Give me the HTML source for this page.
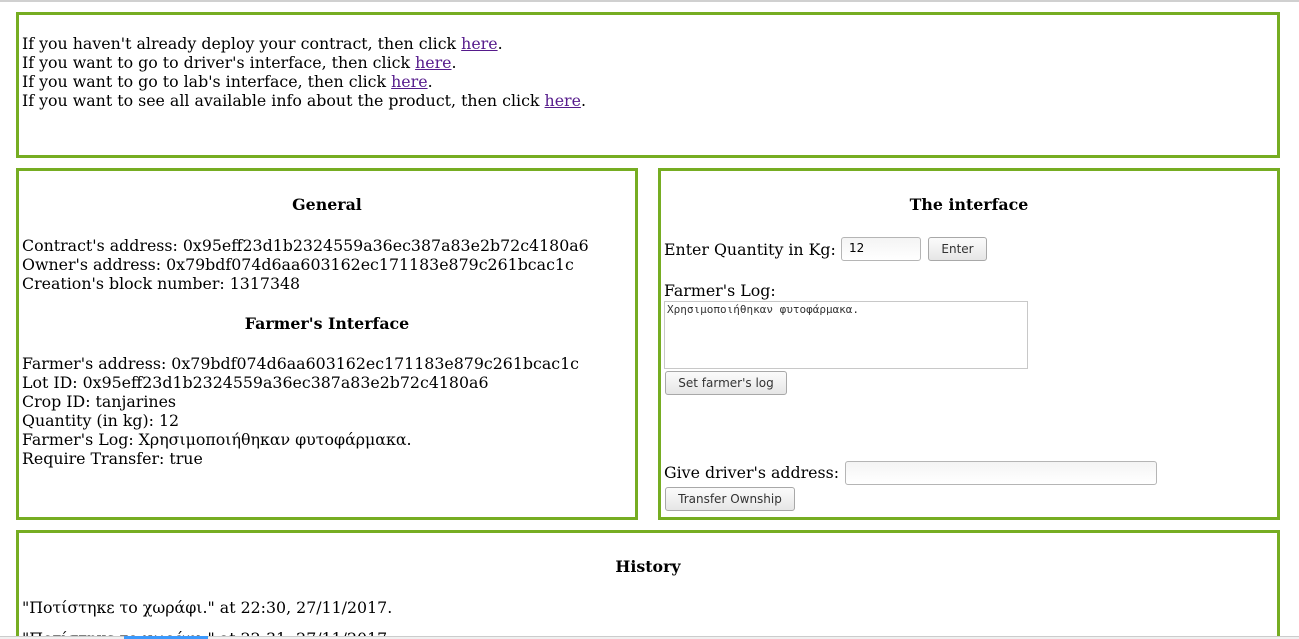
<!DOCTYPE html>
<html style="height:639px;overflow:hidden"><head><meta charset="utf-8"><style>
body{margin:0;width:1299px;height:639px;overflow:hidden;background:#fff;font-family:"DejaVu Serif","Liberation Serif",serif;font-size:15.8px;color:#000;position:relative}
.box{position:absolute;border:3px solid #76ad22;box-sizing:border-box}
.t{position:absolute;line-height:19px;white-space:nowrap}
.c{text-align:center;font-weight:bold}
a{color:#551a8b;text-decoration:underline}
.inp{position:absolute;border:1px solid #b5b5b5;border-radius:3px;background:linear-gradient(#f4f4f4,#fff);box-sizing:border-box;font-family:"DejaVu Sans",sans-serif;font-size:12px;padding-left:7px;line-height:21px}
.btn{position:absolute;border:1px solid #a8a8a8;border-radius:3px;background:linear-gradient(#fbfbfb,#e6e6e6);box-sizing:border-box;font-family:"DejaVu Sans",sans-serif;font-size:12px;color:#333;text-align:center;line-height:22px}
</style></head><body>
<div style="position:absolute;left:0;top:0;width:1299px;height:2px;background:#d0d0d0"></div>
<div class="box" style="left:16px;top:12px;width:1264px;height:146px"></div>
<div class="t" style="left:22px;top:34px">If you haven't already deploy your contract, then click <a>here</a>.</div>
<div class="t" style="left:22px;top:53px">If you want to go to driver's interface, then click <a>here</a>.</div>
<div class="t" style="left:22px;top:72px">If you want to go to lab's interface, then click <a>here</a>.</div>
<div class="t" style="left:22px;top:91px">If you want to see all available info about the product, then click <a>here</a>.</div>

<div class="box" style="left:16px;top:168px;width:622px;height:352px"></div>
<div class="t c" style="left:19px;width:616px;top:195px">General</div>
<div class="t" style="left:22px;top:236px">Contract's address: 0x95eff23d1b2324559a36ec387a83e2b72c4180a6</div>
<div class="t" style="left:22px;top:255px">Owner's address: 0x79bdf074d6aa603162ec171183e879c261bcac1c</div>
<div class="t" style="left:22px;top:274px">Creation's block number: 1317348</div>
<div class="t c" style="left:19px;width:616px;top:314px">Farmer's Interface</div>
<div class="t" style="left:22px;top:354px">Farmer's address: 0x79bdf074d6aa603162ec171183e879c261bcac1c</div>
<div class="t" style="left:22px;top:373px">Lot ID: 0x95eff23d1b2324559a36ec387a83e2b72c4180a6</div>
<div class="t" style="left:22px;top:392px">Crop ID: tanjarines</div>
<div class="t" style="left:22px;top:411px">Quantity (in kg): 12</div>
<div class="t" style="left:22px;top:430px">Farmer's Log: Χρησιμοποιήθηκαν φυτοφάρμακα.</div>
<div class="t" style="left:22px;top:449px">Require Transfer: true</div>

<div class="box" style="left:658px;top:168px;width:622px;height:352px"></div>
<div class="t c" style="left:661px;width:616px;top:195px">The interface</div>
<div class="t" style="left:664px;top:240px">Enter Quantity in Kg:</div>
<div class="inp" style="left:841px;top:237px;width:80px;height:24px">12</div>
<div class="btn" style="left:928px;top:237px;width:59px;height:24px">Enter</div>
<div class="t" style="left:664px;top:281px">Farmer's Log:</div>
<div style="position:absolute;left:664px;top:301px;width:364px;height:68px;border:1px solid #c8c8c8;box-sizing:border-box;font-family:'DejaVu Sans Mono',monospace;font-size:11px;padding:1px 2px;line-height:13px;color:#333">Χρησιμοποιήθηκαν φυτοφάρμακα.</div>
<div class="btn" style="left:665px;top:371px;width:122px;height:24px">Set farmer's log</div>
<div class="t" style="left:664px;top:463px">Give driver's address:</div>
<div class="inp" style="left:845px;top:461px;width:312px;height:24px"></div>
<div class="btn" style="left:665px;top:487px;width:130px;height:24px">Transfer Ownship</div>

<div class="box" style="left:16px;top:530px;width:1264px;height:109px;border-bottom:none"></div>
<div class="t c" style="left:19px;width:1258px;top:557px">History</div>
<div class="t" style="left:22px;top:598px">"Ποτίστηκε το χωράφι." at 22:30, 27/11/2017.</div>
<div style="position:absolute;left:22px;top:629px;height:7px;overflow:hidden;line-height:19px;white-space:nowrap">"Ποτίστηκε το χωράφι." at 22:31, 27/11/2017.</div>
<div style="position:absolute;z-index:5;left:0;top:636px;width:1299px;height:3px;background:#f0f0f0;border-top:1px solid #ccc;box-sizing:border-box"></div>
<div style="position:absolute;z-index:6;left:124px;top:636px;width:84px;height:3px;background:#3b99fc"></div>
</body></html>
